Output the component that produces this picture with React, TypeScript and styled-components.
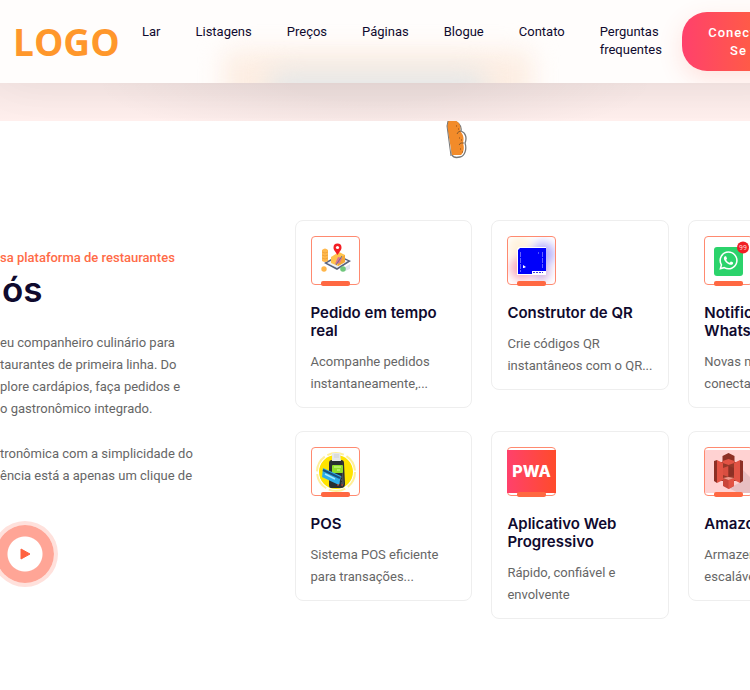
import React from "react";
import styled, { createGlobalStyle } from "styled-components";
import { FaWhatsapp } from "react-icons/fa";

const GlobalStyle = createGlobalStyle`
  * { box-sizing: border-box; }
  body {
    margin: 0;
    background: #fff;
    color: #666;
    font: 400 13px/22px Roboto, "Liberation Sans", sans-serif;
    overflow-x: hidden;
  }
  h2, h3, p { margin: 0; }
`;

const Page = styled.div`
  overflow: hidden;
`;

const Header = styled.header`
  position: relative;
  z-index: 2;
  display: flex;
  align-items: flex-start;
  width: 106%;
  height: 83px;
  padding: 12px 0 0 13px;
  overflow: hidden;
  background: #fffdfc;
  box-shadow: 0 0 50px rgba(0, 0, 0, 0.05);

  &::before,
  &::after {
    content: "";
    position: absolute;
    z-index: -1;
    border-radius: 12px;
  }

  &::before {
    top: 50px;
    left: 28%;
    width: 39%;
    height: 60px;
    background: #fdeee3;
    filter: blur(12px);
  }

  &::after {
    top: 70px;
    left: 34%;
    width: 27%;
    height: 40px;
    background: #e6e8e8;
    filter: blur(12px);
  }
`;

const Logo = styled.a`
  flex: none;
  width: 129px;
  color: #ff972b;
  font: 700 37px/60px "Open Sans", "Noto Sans", sans-serif;
  text-decoration: none;
`;

const Nav = styled.nav`
  display: flex;
  flex: 1;
  gap: 35px;
  padding-top: 11px;
`;

const NavLink = styled.a`
  color: #0f0a2e;
  line-height: 18px;
  text-decoration: none;
`;

const LoginButton = styled.button`
  flex: none;
  width: 113px;
  height: 59px;
  padding: 0 20px;
  border: 0;
  border-radius: 25px;
  background: linear-gradient(90deg, #ff416c, #ff5a48 60%, #ff4b2b);
  box-shadow: 0 8px 24px rgba(255, 90, 60, 0.16);
  color: #fff;
  font: 500 13px/18px Roboto, sans-serif;
  letter-spacing: 1px;
`;

const HeroEdge = styled.div`
  height: 38px;
  background:
    linear-gradient(rgba(0, 0, 0, 0.04), rgba(0, 0, 0, 0)),
    radial-gradient(ellipse 280px 60px at 50% 0, rgba(0, 0, 0, 0.05) 30%, rgba(0, 0, 0, 0) 100%),
    #ffefed;
`;

const About = styled.section`
  position: relative;
  display: grid;
  grid-template-columns: 34fr 66fr;
  width: 115.5%;
  padding: 99px 0 71px;
`;

const Bread = styled.svg`
  position: absolute;
  top: 0;
  left: 51.5%;
`;

const Intro = styled.div`
  padding-top: 27px;
  white-space: nowrap;
`;

const Eyebrow = styled.p`
  color: #ff6b47;
  font-weight: 500;
`;

const Heading = styled.h2`
  padding-left: 2px;
  color: #0f0a2e;
  font: 600 35px/40px Inter, sans-serif;
`;

const Copy = styled.p`
  margin-top: 23px;

  & > span { display: block; }
`;

const PlayButton = styled.button`
  display: grid;
  place-items: center;
  width: 58px;
  height: 58px;
  margin: 38px 0 0 -4px;
  padding: 0;
  border: 0;
  border-radius: 50%;
  background: radial-gradient(circle, #fff 17px, #ffa596 18px);
  box-shadow: 0 0 0 4px #ffe1dc;
`;

const Features = styled.div`
  display: grid;
  grid-template-columns: repeat(3, minmax(0, 1fr));
  align-items: start;
  gap: 23px 19px;
`;

const Card = styled.article`
  padding: 15px 15px 12px;
  border: 1px solid #eee;
  border-radius: 8px;
  background: #fff;
`;

const IconFrame = styled.div`
  position: relative;
  width: 49px;
  height: 49px;
  margin-bottom: 19px;
  border: 1px solid #ff8a70;
  border-radius: 4px;

  & > svg { display: block; margin: -1px; }

  &::after {
    content: "";
    position: absolute;
    bottom: -2px;
    left: 9px;
    width: 29px;
    height: 5px;
    border-radius: 2px;
    background: #ff6842;
  }
`;

const CardTitle = styled.h3`
  margin-bottom: 11px;
  color: #0f0a2e;
  font: 600 15px/18px Inter, sans-serif;
`;

const CardText = styled.p`
  & > span { display: block; white-space: nowrap; }
`;

const TrackingIcon = () => (
  <svg width="49" height="49" viewBox="0 0 49 49" aria-hidden="true">
    <path d="M34 31l5-3v5l-5 2z" fill="#dfe4ee" />
    <path d="M13 27l14-8 13 6-14 9z" fill="#58617a" />
    <path d="M16 27l11-6 10 4-11 7z" fill="#edf0f8" />
    <path d="M20 21l8-5 6 3v7l-7 4-7-3z" fill="#ffc34d" />
    <path d="M27 24l7-5v7l-7 4z" fill="#f3a638" />
    <path d="M24 28l3-7 4 1-2 5z" fill="#dd718f" />
    <path d="M31 20l-6 9" stroke="#68709b" />
    <path d="M11 14q3-3 6 0v11q-3 2-6 0z" fill="#ffb94e" />
    <path d="M11 16q3 2 6 0M11 19q3 2 6 0M11 22q3 2 6 0" fill="none" stroke="#e99c35" strokeWidth=".7" />
    <circle cx="13" cy="33" r="2.7" fill="#ffb64a" />
    <circle cx="32" cy="33" r="2.8" fill="#70c77c" />
    <path d="M26.500 19C24 15 22.500 14 22.500 11.500a4 4 0 018 0C30.500 14 29 15 26.500 19z" fill="#f31e24" />
    <circle cx="26.500" cy="11.500" r="1.600" fill="#fff" />
  </svg>
);

const QrIcon = () => (
  <svg width="49" height="49" viewBox="0 0 49 49" aria-hidden="true">
    <defs>
      <filter id="qrSoft" x="-50%" y="-50%" width="200%" height="200%"><feGaussianBlur stdDeviation="5" /></filter>
      <clipPath id="qrFrame"><rect x="1" y="1" width="47" height="47" rx="3" /></clipPath>
    </defs>
    <g clipPath="url(#qrFrame)">
      <g filter="url(#qrSoft)">
        <circle cx="13" cy="12" r="12" fill="#fff2dc" />
        <circle cx="36" cy="18" r="12" fill="#b7b0fa" />
        <circle cx="15" cy="32" r="12" fill="#f8aebe" />
        <circle cx="34" cy="36" r="9" fill="#d2b0df" />
      </g>
    </g>
    <path d="M12 11h27v28H10V13z" fill="#fff" />
    <path d="M13 12h26v23H25v3H11V14z" fill="#0000fa" />
    <path d="M13.500 16v20M35.500 16v16" stroke="#8f8bff" strokeWidth=".7" strokeDasharray="5 1" />
    <path d="M16 29l3 2-2 1h-1z" fill="#fff" />
    <path d="M26 36.500h10" stroke="#3c39e4" strokeDasharray="2 1" />
    <path d="M31 17h1" stroke="#9caaff" />
  </svg>
);

const WhatsappIcon = () => (
  <svg width="49" height="49" viewBox="0 0 49 49" aria-hidden="true">
    <rect x="10" y="11" width="29" height="29" rx="3" fill="#2bd36b" />
    <FaWhatsapp x="14" y="14" size="21" color="#fff" />
    <circle cx="39" cy="11.500" r="6" fill="#f01f24" />
    <text x="39" y="14" textAnchor="middle" fill="#ffd1d1" fontFamily="Roboto" fontSize="7">99</text>
  </svg>
);

const PosIcon = () => (
  <svg width="49" height="49" viewBox="0 0 49 49" aria-hidden="true">
    <circle cx="25" cy="25" r="19" fill="none" stroke="#fff09a" strokeWidth="2" strokeDasharray="17 3" />
    <circle cx="25" cy="25" r="17" fill="#ffe400" />
    <path d="M18 16q0-3 3-3h9q3 0 3 3l1 21q0 4-4 4H20q-2 0-2-3z" fill="#292e32" />
    <path d="M31 14l2 23-2 3z" fill="#4b5052" />
    <path d="M21 6h8l1 8h-9z" fill="#e5e7e9" />
    <path d="M23 8h5M23 10h5" stroke="#c4c8ca" strokeWidth=".7" />
    <rect x="21" y="18" width="11" height="8" rx="1" fill="#91df28" />
    <path d="M23 20h7M26 23h3" stroke="#dcff9b" />
    <path d="M26 30h5M26 33h5M26 36h5" stroke="#646b70" strokeDasharray="1 1" />
    <path d="M12 21l18 8-2 9-17-8z" fill="#2faee9" />
    <path d="M12 23l17 8" stroke="#195080" strokeWidth="2" />
    <path d="M14 27l10 5" stroke="#a5e9ff" strokeWidth="1.500" />
    <path d="M26 38h2M30 38h2" stroke="#de442e" />
  </svg>
);

const PwaIcon = () => (
  <svg width="49" height="49" viewBox="0 0 49 49" aria-hidden="true">
    <defs>
      <linearGradient id="pwaFill"><stop stopColor="#ff416c" /><stop offset="1" stopColor="#ff4b2b" /></linearGradient>
    </defs>
    <path d="M0 3h49v43H0z" fill="url(#pwaFill)" />
    <text x="24.500" y="30" textAnchor="middle" fill="#fff" fontFamily="Inter" fontSize="16" fontWeight="800">PWA</text>
  </svg>
);

const StorageIcon = () => (
  <svg width="49" height="49" viewBox="0 0 49 49" aria-hidden="true">
    <path d="M1 3h47v43H1z" fill="#ffd2d2" />
    <path d="M39 23l9 9v14H34l-9-5 10-5z" fill="#e8bfc2" />
    <path d="M14 15h21v19H14z" fill="#963829" />
    <path d="M10 14l3-1v23l-3-2zM39 14l-3-1v23l3-2z" fill="#8d3025" />
    <path d="M13 13l6 3v17l-6 3zM36 13l-6 3v17l6 3z" fill="#e25344" />
    <path d="M24.500 6l6 3v7l-6 2-6-2V9z" fill="#8d3025" />
    <path d="M18.500 14l6-2 6 2v2l-6 2-6-2z" fill="#e25344" />
    <path d="M19 21l5.500-2v11L19 28z" fill="#d94e40" />
    <path d="M24.500 19l5.500 2v7l-5.500 2z" fill="#8d3025" />
    <path d="M19 31l5.500 2 5.500-2v8l-5.500 3-5.500-3z" fill="#c94539" />
    <path d="M24.500 33l5.500-2v8l-5.500 3z" fill="#e25344" />
    <path d="M19 31l5.500-1 5.500 1-5.500 2z" fill="#ef9a8e" />
  </svg>
);

const features = [
  { title: "Pedido em tempo real", text: ["Acompanhe pedidos", "instantaneamente,..."], Icon: TrackingIcon },
  { title: "Construtor de QR", text: ["Crie códigos QR", "instantâneos com o QR..."], Icon: QrIcon },
  { title: "Notificações WhatsApp", text: ["Novas mensagens", "conectadas"], Icon: WhatsappIcon },
  { title: "POS", text: ["Sistema POS eficiente", "para transações..."], Icon: PosIcon },
  { title: "Aplicativo Web Progressivo", text: ["Rápido, confiável e", "envolvente"], Icon: PwaIcon },
  { title: "Amazon S3", text: ["Armazenamento", "escalável"], Icon: StorageIcon },
];

const links = ["Lar", "Listagens", "Preços", "Páginas", "Blogue", "Contato", "Perguntas frequentes"];

const story = [
  ["eu companheiro culinário para", "taurantes de primeira linha. Do", "plore cardápios, faça pedidos e", "o gastronômico integrado."],
  ["tronômica com a simplicidade do", "ência está a apenas um clique de"],
];

export default function App() {
  return (
    <Page>
      <GlobalStyle />
      <Header>
        <Logo href="#">LOGO</Logo>
        <Nav>{links.map((label) => <NavLink href="#" key={label}>{label}</NavLink>)}</Nav>
        <LoginButton type="button">Conecte-Se</LoginButton>
      </Header>
      <HeroEdge />
      <About>
        <Bread width="22" height="38" viewBox="0 0 22 38" aria-hidden="true">
          <path d="M6 0c5 0 10 4 9 10 5 2 6 7 4 12 2 6 0 13-5 14-4 1-7 0-8-2z" fill="#fff" stroke="#777" strokeWidth="1.300" />
          <path d="M2 0h8c4 2 5 6 4 10 4 4 4 8 3 12 2 6 0 10-2 12H6L1 5z" fill="#f28b2a" />
          <path d="M2 0L1 5l4 30" fill="none" stroke="#777" />
          <path d="M15 10q-3 0-4 3M18 22q-4-1-5 2" fill="none" stroke="#8a5b2a" />
          <path d="M10 5h1M12 8h1M13 17h1M15 19h1M14 28h1M16 31h1" stroke="#8a4a18" />
        </Bread>
        <Intro>
          <Eyebrow>sa plataforma de restaurantes</Eyebrow>
          <Heading>ós</Heading>
          {story.map((lines) => (
            <Copy key={lines[0]}>{lines.map((line) => <span key={line}>{line}</span>)}</Copy>
          ))}
          <PlayButton type="button" aria-label="Reproduzir vídeo">
            <svg width="12" height="12" viewBox="0 0 12 12" aria-hidden="true">
              <path d="M2 1l9 5-9 5z" fill="#ff6240" stroke="#ff6240" strokeLinejoin="round" />
            </svg>
          </PlayButton>
        </Intro>
        <Features>
          {features.map(({ title, text, Icon }) => (
            <Card key={title}>
              <IconFrame><Icon /></IconFrame>
              <CardTitle>{title}</CardTitle>
              <CardText>{text.map((line) => <span key={line}>{line}</span>)}</CardText>
            </Card>
          ))}
        </Features>
      </About>
    </Page>
  );
}
